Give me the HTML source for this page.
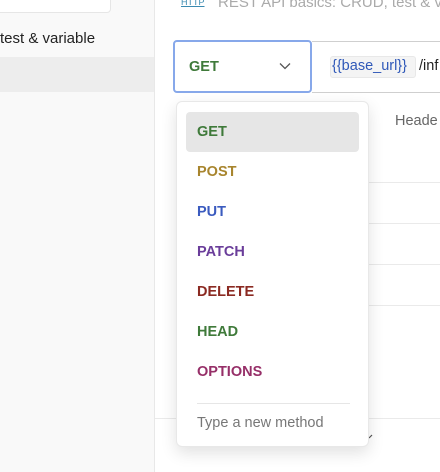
<!DOCTYPE html><html><head><style>
body{margin:0;width:440px;height:472px;overflow:hidden;position:relative;font-family:"Liberation Sans",sans-serif;background:#fff}
.a{position:absolute;white-space:nowrap}
.m{position:absolute;left:20px;font-weight:bold;font-size:14.5px}
</style></head><body>
<div class="a" style="left:0;top:0;width:154px;height:472px;background:#f9f9f9;border-right:1px solid #e8e8e8"></div>
<div class="a" style="left:-5px;top:-5px;width:114px;height:16px;border:1px solid #e6e6e6;border-radius:4px;background:#fff"></div>
<div class="a" style="left:0;top:30px;font-size:15px;color:#222">test &amp; variable</div>
<div class="a" style="left:0;top:57px;width:154px;height:35px;background:#ededed"></div>
<div class="a" style="left:181px;top:-3px;font-size:9px;color:#3a8ab0;text-decoration:underline">HTTP</div>
<div class="a" style="left:218px;top:-6px;font-size:15px;color:#aaa">REST API basics: CRUD, test &amp; v</div>
<div class="a" style="left:312px;top:41px;width:140px;height:50px;border:1px solid #cfcfcf;border-left:none"></div>
<div class="a" style="left:173px;top:40px;width:135px;height:49px;border:2.5px solid #87a8ea;border-radius:4px;background:#fff"></div>
<div class="a" style="left:189px;top:59px;font-weight:bold;font-size:14.5px;color:#3f7a3a">GET</div>
<svg class="a" style="left:279px;top:62px" width="12" height="8"><path d="M1 1.5L6 6.5L11 1.5" fill="none" stroke="#555" stroke-width="1.3"/></svg>
<div class="a" style="left:330px;top:56px;width:86px;height:22px;background:#f4f4f4;border:1px solid #e8e8e8;border-radius:3px;box-sizing:border-box"></div>
<div class="a" style="left:332px;top:58px;font-size:14.5px;color:#2f58b8">{{base_url}}</div>
<div class="a" style="left:419px;top:58px;font-size:14.5px;color:#222">/inf</div>
<div class="a" style="left:395px;top:113px;font-size:14.5px;color:#666">Heade</div>
<div class="a" style="left:369px;top:182px;width:71px;height:1px;background:#eaeaea"></div>
<div class="a" style="left:369px;top:223px;width:71px;height:1px;background:#eaeaea"></div>
<div class="a" style="left:369px;top:264px;width:71px;height:1px;background:#eaeaea"></div>
<div class="a" style="left:369px;top:305px;width:71px;height:1px;background:#eaeaea"></div>
<div class="a" style="left:155px;top:418px;width:285px;height:1px;background:#eaeaea"></div>
<svg class="a" style="left:368px;top:434px" width="8" height="6"><path d="M1 4L4 1" fill="none" stroke="#555" stroke-width="1.2"/></svg>
<div class="a" style="left:176px;top:101px;width:193px;height:346px;background:#fff;border:1px solid #e8e8e8;border-radius:6px;box-sizing:border-box;box-shadow:0 6px 16px rgba(0,0,0,.12)">
<div class="a" style="left:9px;top:10px;width:173px;height:40px;background:#e6e6e6;border-radius:4px"></div>
<div class="m" style="top:22px;color:#3f7a3a">GET</div>
<div class="m" style="top:62px;color:#a8852e">POST</div>
<div class="m" style="top:102px;color:#3b5bbf">PUT</div>
<div class="m" style="top:142px;color:#6a3d9a">PATCH</div>
<div class="m" style="top:182px;color:#8b2a22">DELETE</div>
<div class="m" style="top:222px;color:#3f7a3a">HEAD</div>
<div class="m" style="top:262px;color:#962f68">OPTIONS</div>
<div class="a" style="left:20px;top:301px;width:153px;height:1px;background:#e6e6e6"></div>
<div class="a" style="left:20px;top:313px;font-size:14.5px;color:#777">Type a new method</div>
</div>
</body></html>
